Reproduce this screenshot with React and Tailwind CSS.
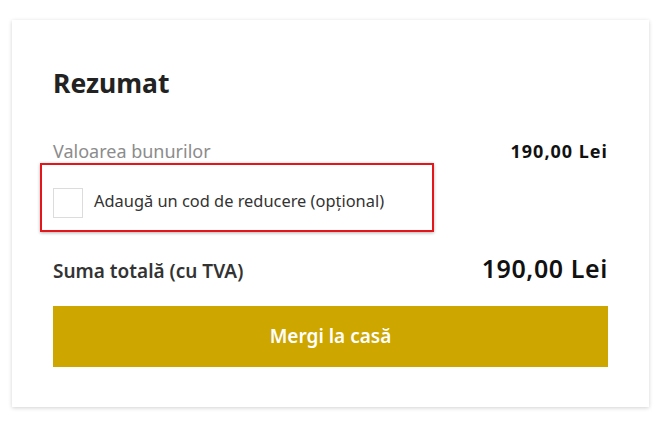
import { useState } from 'react';

const Summary = ({ subtotal, total }) => {
  const [useCode, setUseCode] = useState(false);

  return (
    <div className="w-[637px] bg-white shadow-[0_1px_4px_rgba(0,0,0,0.18)] px-[41px] pt-[46px] pb-[40px]">
      <h2 className="text-[26.5px] leading-[34px] font-bold text-[#222]">Rezumat</h2>

      <div className="mt-[39px] flex justify-between items-baseline leading-[24px]">
        <span className="text-[18px] text-[#8c8c8c]">Valoarea bunurilor</span>
        <span className="text-[18px] font-bold tracking-[1px] text-[#111]">{subtotal}</span>
      </div>

      {/* highlighted discount code row */}
      <div className="-ml-[13px] w-[394px] h-[69px] border-2 border-[#e3161b] shadow-[0_1px_3px_rgba(0,0,0,0.3)] pl-[11px] pt-[23px]">
        <label className="flex items-center gap-[11px] cursor-pointer">
          <input
            type="checkbox"
            checked={useCode}
            onChange={(e) => setUseCode(e.target.checked)}
            className="appearance-none w-[30px] h-[30px] border border-[#dcdcdc] bg-white"
          />
          <span className="text-[16.4px] text-[#333] -mt-[4px]">Adaugă un cod de reducere (opțional)</span>
        </label>
      </div>

      <div className="mt-[21px] flex justify-between items-baseline leading-[30px]">
        <span className="text-[19px] font-semibold text-[#333]">Suma totală (cu TVA)</span>
        <span className="text-[25px] font-semibold tracking-[0.6px] text-[#111]">{total}</span>
      </div>

      <button className="mt-[20px] w-full h-[61px] bg-[#cda600] text-white text-[19px] font-semibold">
        Mergi la casă
      </button>
    </div>
  );
};

export default function App() {
  return (
    <div className="min-h-[425px] bg-white pt-[20px] pl-[12px]" style={{ fontFamily: '"Noto Sans", Lato, sans-serif' }}>
      <Summary subtotal="190,00 Lei" total="190,00 Lei" />
    </div>
  );
}
